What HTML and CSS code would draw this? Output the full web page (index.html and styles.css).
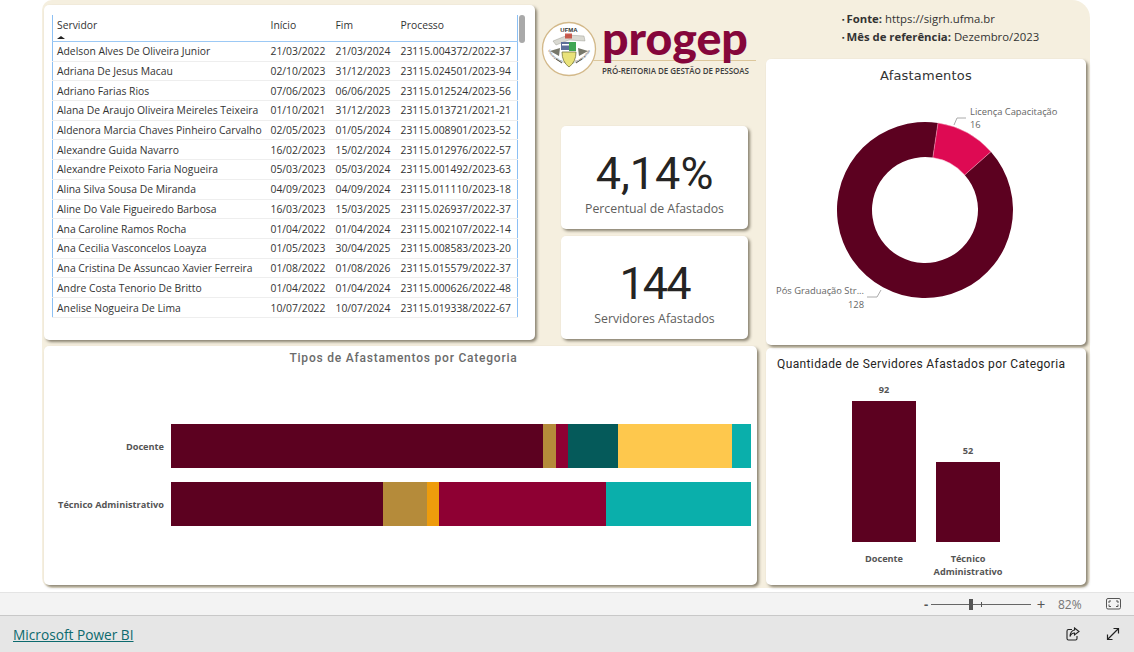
FILE: index.html
```html
<!DOCTYPE html>
<html lang="pt-BR">
<head>
<meta charset="utf-8">
<title>Afastamentos - PROGEP</title>
<link rel="stylesheet" href="styles.css">
</head>
<body>
<main class="stage">
  <div class="canvas">
    <div class="left">
      <div class="top-row">
        <section class="card table-card">
          <div class="table-wrap">
            <table class="grid">
              <thead>
                <tr><th class="c-name">Servidor<span class="sort"></span></th><th class="c-date">Início</th><th class="c-date">Fim</th><th>Processo</th></tr>
              </thead>
              <tbody>
                <tr><td>Adelson Alves De Oliveira Junior</td><td>21/03/2022</td><td>21/03/2024</td><td>23115.004372/2022-37</td></tr>
                <tr><td>Adriana De Jesus Macau</td><td>02/10/2023</td><td>31/12/2023</td><td>23115.024501/2023-94</td></tr>
                <tr><td>Adriano Farias Rios</td><td>07/06/2023</td><td>06/06/2025</td><td>23115.012524/2023-56</td></tr>
                <tr><td>Alana De Araujo Oliveira Meireles Teixeira</td><td>01/10/2021</td><td>31/12/2023</td><td>23115.013721/2021-21</td></tr>
                <tr><td>Aldenora Marcia Chaves Pinheiro Carvalho</td><td>02/05/2023</td><td>01/05/2024</td><td>23115.008901/2023-52</td></tr>
                <tr><td>Alexandre Guida Navarro</td><td>16/02/2023</td><td>15/02/2024</td><td>23115.012976/2022-57</td></tr>
                <tr><td>Alexandre Peixoto Faria Nogueira</td><td>05/03/2023</td><td>05/03/2024</td><td>23115.001492/2023-63</td></tr>
                <tr><td>Alina Silva Sousa De Miranda</td><td>04/09/2023</td><td>04/09/2024</td><td>23115.011110/2023-18</td></tr>
                <tr><td>Aline Do Vale Figueiredo Barbosa</td><td>16/03/2023</td><td>15/03/2025</td><td>23115.026937/2022-37</td></tr>
                <tr><td>Ana Caroline Ramos Rocha</td><td>01/04/2022</td><td>01/04/2024</td><td>23115.002107/2022-14</td></tr>
                <tr><td>Ana Cecilia Vasconcelos Loayza</td><td>01/05/2023</td><td>30/04/2025</td><td>23115.008583/2023-20</td></tr>
                <tr><td>Ana Cristina De Assuncao Xavier Ferreira</td><td>01/08/2022</td><td>01/08/2026</td><td>23115.015579/2022-37</td></tr>
                <tr><td>Andre Costa Tenorio De Britto</td><td>01/04/2022</td><td>01/04/2024</td><td>23115.000626/2022-48</td></tr>
                <tr><td>Anelise Nogueira De Lima</td><td>10/07/2022</td><td>10/07/2024</td><td>23115.019338/2022-67</td></tr>
              </tbody>
            </table>
            <div class="scroll-thumb"></div>
          </div>
        </section>
        <div class="center-col">
          <div class="logo">
            <svg class="seal" width="56" height="56" viewBox="0 0 56 56">
              <defs><path id="sealArc" d="M5 24 A23.500 23.500 0 0 0 51 24"/></defs>
              <circle cx="28" cy="28" r="26.500" fill="#fff" stroke="#d3b98a" stroke-width="1.300"/>
              <text x="28" y="10.500" text-anchor="middle" class="seal-title">UFMA</text>
              <text class="seal-arc"><textPath href="#sealArc" startOffset="50%" text-anchor="middle">Universidade Federal do Maranhão</textPath></text>
              <path d="M12 20 L27 14 L43 15 L44 20 L28 19 L15 24 Z" fill="#d9d9d2" stroke="#8a8a80" stroke-width=".4"/>
              <rect x="24" y="12.500" width="7" height="5" fill="#c0392b" opacity=".8"/>
              <rect x="20" y="21" width="9" height="8" fill="#5c6f99"/>
              <rect x="21" y="23" width="7" height="1.500" fill="#fff"/>
              <rect x="28" y="21" width="7" height="9" fill="#3fa652"/>
              <path d="M21 31 H35 Q35 41 28 46 Q21 41 21 31 Z" fill="#e9e27a" stroke="#77773f" stroke-width=".8"/>
              <path d="M9 30 L19 27 L18 35 Z M47 30 L37 27 L38 35 Z" fill="#77776a"/>
              <path d="M15 38 L21 42 M41 38 L35 42" stroke="#55554a" stroke-width="1"/>
            </svg>
            <div class="logo-words">
              <div class="logo-name">progep</div>
              <div class="logo-rule"></div>
              <div class="logo-sub">PRÓ-REITORIA DE GESTÃO DE PESSOAS</div>
            </div>
          </div>
          <section class="card kpi kpi-first">
            <div class="kpi-value">4,14%</div>
            <div class="kpi-label">Percentual de Afastados</div>
          </section>
          <section class="card kpi">
            <div class="kpi-value kpi-tight">144</div>
            <div class="kpi-label">Servidores Afastados</div>
          </section>
        </div>
      </div>
      <section class="card tipos">
        <h2 class="tipos-title">Tipos de Afastamentos por Categoria</h2>
        <div class="hbars">
          <div class="hbar-row">
            <div class="hbar-label">Docente</div>
            <div class="hbar">
              <span class="s-wine" style="width:64.1%"></span><span class="s-tan" style="width:2.3%"></span><span class="s-crimson" style="width:2%"></span><span class="s-deep" style="width:8.7%"></span><span class="s-yellow" style="width:19.6%"></span><span class="s-teal" style="width:3.3%"></span>
            </div>
          </div>
          <div class="hbar-row">
            <div class="hbar-label">Técnico Administrativo</div>
            <div class="hbar">
              <span class="s-wine" style="width:36.6%"></span><span class="s-tan" style="width:7.6%"></span><span class="s-orange" style="width:2%"></span><span class="s-crimson" style="width:28.8%"></span><span class="s-teal" style="width:25%"></span>
            </div>
          </div>
        </div>
      </section>
    </div>
    <div class="right">
      <ul class="source">
        <li><b>Fonte:</b> https://sigrh.ufma.br</li>
        <li><b>Mês de referência:</b> Dezembro/2023</li>
      </ul>
      <section class="card donut-card">
        <h2 class="donut-title">Afastamentos</h2>
        <svg class="donut" width="320" height="270" viewBox="0 0 320 270">
          <path fill="#5c0120" d="M172 47.970 A88 88 0 1 0 224.900 76.700 L198.700 99.880 A53 53 0 1 1 166.830 82.580 Z"/>
          <path fill="#de0a53" stroke="#f3a9c0" stroke-width=".5" d="M172 47.970 A88 88 0 0 1 224.900 76.700 L198.700 99.880 A53 53 0 0 0 166.830 82.580 Z"/>
          <polyline points="188,50 191,43 200,43" class="leader"/>
          <polyline points="101,222 111,222 115,215" class="leader"/>
          <text x="204" y="40" class="donut-text">Licença Capacitação</text>
          <text x="204" y="53" class="donut-text">16</text>
          <text x="98" y="219" text-anchor="end" class="donut-text">Pós Graduação Str...</text>
          <text x="98" y="233" text-anchor="end" class="donut-text">128</text>
        </svg>
      </section>
      <section class="card qty">
        <h2 class="qty-title">Quantidade de Servidores Afastados por Categoria</h2>
        <div class="vbars">
          <div class="vbar-col">
            <div class="vbar-plot"><div class="vbar-value">92</div><div class="vbar" style="height:141px"></div></div>
            <div class="vbar-label">Docente</div>
          </div>
          <div class="vbar-col">
            <div class="vbar-plot"><div class="vbar-value">52</div><div class="vbar" style="height:80px"></div></div>
            <div class="vbar-label">Técnico Administrativo</div>
          </div>
        </div>
      </section>
    </div>
  </div>
</main>
<div class="zoombar">
  <span class="zoom-sign">-</span>
  <div class="slider"><span class="slider-thumb"></span><span class="slider-tick"></span></div>
  <span class="zoom-sign zoom-plus">+</span>
  <span class="zoom-pct">82%</span>
  <svg class="fit" width="15" height="12" viewBox="0 0 15 12" fill="none" stroke="#555" stroke-width="1">
    <rect x=".5" y=".5" width="14" height="10.500" rx="1.500"/>
    <path d="M5 3H3V5M10 3H12V5M5 8.500H3V6.500M10 8.500H12V6.500"/>
  </svg>
</div>
<footer class="footer">
  <a class="pbi-link" href="#">Microsoft Power BI</a>
  <div class="footer-icons">
    <svg width="14" height="14" viewBox="0 0 14 14" fill="none" stroke="#222" stroke-width="1.100">
      <path d="M6 2.500H2.500A1.500 1.500 0 0 0 1 4V11.500A1.500 1.500 0 0 0 2.500 13H9.500A1.500 1.500 0 0 0 11 11.500V9"/>
      <path d="M8.500 1L13 4.500 8.500 8V6C6.500 6 5 7 4 9.500 4 6 6 3.200 8.500 3Z"/>
    </svg>
    <svg width="14" height="14" viewBox="0 0 14 14" fill="none" stroke="#222" stroke-width="1.200">
      <path d="M1.500 12.500L12.500 1.500M7.500 1.500H12.500V6.500M1.500 7.500V12.500H6.500"/>
    </svg>
  </div>
</footer>
</body>
</html>
```

FILE: styles.css
```css
* { box-sizing: border-box; }
html, body { margin: 0; height: 100%; }
body {
  width: 1134px;
  height: 652px;
  overflow: hidden;
  background: #fff;
  font-family: "Open Sans", "Noto Sans", sans-serif;
  color: #252423;
}
.stage { height: 592px; padding-left: 42px; }
.canvas {
  width: 1048px;
  height: 588px;
  background: #f5efdf;
  border-radius: 0 0 10px 10px;
  border-top-right-radius: 18px;
  border-top-left-radius: 10px;
  padding: 5px 4px 3px 2px;
  display: flex;
  gap: 9px;
}
.card {
  background: #fff;
  border-radius: 5px;
  box-shadow: 2px 2px 3px rgba(82, 74, 56, .65);
}
.left { width: 713px; display: flex; flex-direction: column; gap: 6px; }
.top-row { display: flex; height: 335px; }
.table-card { width: 491px; height: 335px; padding: 10px 0 0 8px; }
.table-wrap { position: relative; width: 466px; }
.grid {
  width: 466px;
  table-layout: fixed;
  border-collapse: collapse;
  border-left: 1px solid #8cc0f4;
  border-right: 1px solid #8cc0f4;
  font-size: 10.350px;
  color: #333;
}
.grid th {
  height: 26.300px;
  padding: 0 0 6px 4px;
  text-align: left;
  font-weight: 400;
  border-bottom: 1px solid #9cc9f5;
  position: relative;
}
.grid td {
  height: 19.730px;
  padding: 0 0 0 4px;
  border-bottom: 1px solid #eeeeee;
  white-space: nowrap;
  overflow: hidden;
}
.c-name { width: 214px; }
.c-date { width: 65px; }
.sort {
  position: absolute;
  left: 4px;
  bottom: 2px;
  border: 4px solid transparent;
  border-top: 0;
  border-bottom: 3px solid #222;
}
.scroll-thumb {
  position: absolute;
  left: 467px;
  top: 0;
  width: 6px;
  height: 28px;
  border-radius: 3px;
  background: #a9a9a9;
}
.center-col { width: 222px; padding-left: 6px; display: flex; flex-direction: column; }
.logo { height: 121px; padding-top: 15px; display: flex; align-items: flex-start; gap: 5px; }
.seal { flex: none; margin-top: 1px; }
.seal-title { font: 700 6px "Liberation Sans", sans-serif; fill: #333; }
.seal-arc { font: 3.300px "Liberation Sans", sans-serif; fill: #444; }
.logo-words { width: 150px; margin-top: -8px; }
.logo-name {
  font: 900 46.500px/50px "Lato", "Open Sans", sans-serif;
  color: #85063b;
  height: 45px;
}
.logo-rule { height: 1px; background: #dcc79c; margin: 3px -4px 4px -9px; }
.logo-sub {
  font: 600 8px/11px "Open Sans", sans-serif;
  color: #3d3d3d;
  white-space: nowrap;
  letter-spacing: -.05px;
}
.kpi {
  width: 187px;
  height: 103px;
  margin-left: 20px;
  display: flex;
  flex-direction: column;
  align-items: center;
  text-align: center;
}
.kpi + .kpi { margin-top: 7px; }
.kpi-value {
  font: 400 45px/50px "Roboto", sans-serif;
  margin-top: 23px;
  color: #252423;
}
.kpi-tight { letter-spacing: -2px; }
.kpi-label { font-size: 12.300px; line-height: 17px; color: #605e5c; margin-top: 1px; }
.tipos { width: 713px; height: 239px; padding-top: 4px; }
.tipos-title {
  margin: 0;
  padding-left: 6px;
  text-align: center;
  font: 500 12px/16px "Roboto", sans-serif;
  letter-spacing: .78px;
  color: #6b6b6b;
}
.hbars { margin-top: 58px; display: flex; flex-direction: column; gap: 14px; }
.hbar-row { display: flex; align-items: center; height: 44px; }
.hbar-label {
  width: 120px;
  padding: 1px 0 0;
  text-align: right;
  font: 700 9.200px/12px "Open Sans", sans-serif;
  color: #555;
  white-space: nowrap;
}
.hbar { width: 580px; height: 44px; margin-left: 7px; display: flex; }
.hbar span { display: block; height: 100%; }
.s-wine { background: #5c0120; }
.s-tan { background: #b58b3a; }
.s-crimson { background: #8e0033; }
.s-deep { background: #055a5a; }
.s-yellow { background: #fec84d; }
.s-teal { background: #0aafab; }
.s-orange { background: #ee9c0c; }
.right { width: 320px; display: flex; flex-direction: column; }
.source {
  margin: 5px 0 0;
  height: 49px;
  padding: 0 0 0 76px;
  list-style: none;
  font-size: 11.350px;
  line-height: 17px;
  color: #333;
}
.source li::before { content: "▪"; font-size: 7px; margin-right: 2px; vertical-align: 1px; }
.donut-card { height: 286px; padding-top: 9px; position: relative; }
.donut-title {
  margin: 0;
  text-align: center;
  font: 400 13px/16px "DejaVu Sans", sans-serif;
  color: #333;
  letter-spacing: .2px;
}
.donut { display: block; position: absolute; left: 0; top: 16px; }
.leader { fill: none; stroke: #aaa; stroke-width: 1; }
.donut-text { font: 9.350px "Open Sans", sans-serif; fill: #666; }
.qty { height: 237px; margin-top: 3px; padding: 8px 11px 0; }
.qty-title {
  margin: 0;
  font: 400 12px/16px "Roboto", sans-serif;
  letter-spacing: .38px;
  color: #252423;
  white-space: nowrap;
}
.vbars { display: flex; justify-content: center; gap: 20px; }
.vbar-col { width: 64px; }
.vbar-plot { height: 170px; display: flex; flex-direction: column; justify-content: flex-end; align-items: stretch; }
.vbar-value { text-align: center; font: 700 9.200px/12px "Open Sans", sans-serif; color: #555; margin-bottom: 5px; }
.vbar { background: #5c0120; }
.vbar-label {
  margin: 10px -8px 0;
  text-align: center;
  font: 700 9.200px/13px "Open Sans", sans-serif;
  color: #555;
}
.zoombar {
  height: 24px;
  background: #f3f3f3;
  border-top: 1px solid #e4e4e4;
  border-bottom: 1px solid #c8c8c8;
  display: flex;
  align-items: center;
  padding-left: 921px;
  font-size: 12px;
  color: #666;
}
.zoom-sign { width: 10px; text-align: center; font-weight: 700; font-size: 13px; color: #555; }
.zoom-plus { margin-left: 5px; font-weight: 400; font-size: 15px; }
.slider { position: relative; width: 100px; height: 1px; background: #666; }
.slider-thumb { position: absolute; left: 38px; top: -5px; width: 4px; height: 11px; background: #555; }
.slider-tick { position: absolute; left: 50px; top: -2px; width: 1px; height: 5px; background: #555; }
.zoom-pct { margin-left: 12px; width: 23px; color: #767676; }
.fit { margin-left: 25px; }
.footer {
  height: 36px;
  background: #e6e6e6;
  display: flex;
  align-items: center;
  justify-content: space-between;
  padding: 1px 14px 0 13px;
}
.pbi-link { font-size: 13.700px; color: #0c6a6e; text-decoration: underline; }
.footer-icons { display: flex; gap: 26px; margin-top: -1px; }
```
